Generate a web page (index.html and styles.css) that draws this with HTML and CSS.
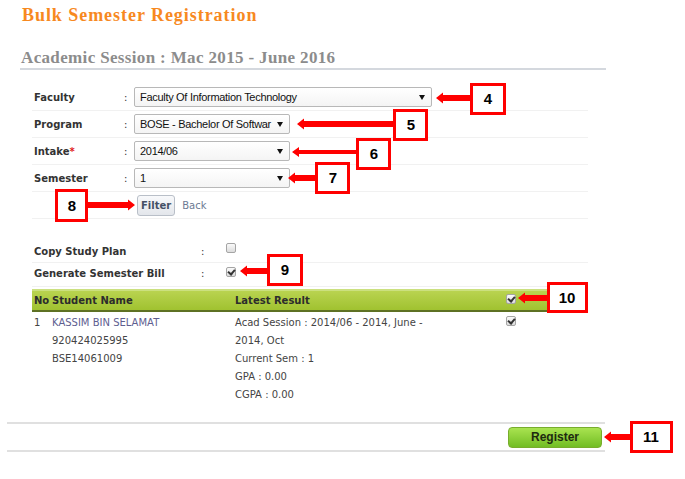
FILE: index.html
```html
<!DOCTYPE html>
<html>
<head>
<meta charset="utf-8">
<link rel="stylesheet" href="styles.css">
</head>
<body>
<div class="page">
  <h1 class="title">Bulk Semester Registration</h1>
  <h2 class="session">Academic Session : Mac 2015 - June 2016</h2>

  <div class="form">
    <div class="frow">
      <span class="lbl">Faculty</span><span class="colon">:</span>
      <div class="sel sel-wide"><span class="sel-text">Faculty Of Information Technology</span><i class="caret"></i></div>
    </div>
    <div class="frow">
      <span class="lbl">Program</span><span class="colon">:</span>
      <div class="sel"><span class="sel-text">BOSE - Bachelor Of Softwar</span><i class="caret"></i></div>
    </div>
    <div class="frow">
      <span class="lbl">Intake<b class="req">*</b></span><span class="colon">:</span>
      <div class="sel"><span class="sel-text">2014/06</span><i class="caret"></i></div>
    </div>
    <div class="frow">
      <span class="lbl">Semester</span><span class="colon">:</span>
      <div class="sel"><span class="sel-text">1</span><i class="caret"></i></div>
    </div>
    <div class="frow actions">
      <span></span><span></span>
      <div class="act"><span class="btn-filter">Filter</span><span class="back">Back</span></div>
    </div>
  </div>

  <div class="opts">
    <div class="orow">
      <span class="olbl">Copy Study Plan</span><span class="ocolon">:</span><span class="cb"></span>
    </div>
    <div class="orow">
      <span class="olbl">Generate Semester Bill</span><span class="ocolon">:</span><span class="cb checked"></span>
    </div>
  </div>

  <div class="list">
    <div class="lhead">
      <span class="c-no">No</span><span class="c-name">Student Name</span><span class="c-res">Latest Result</span><span class="c-cb"><span class="cb checked"></span></span>
    </div>
    <div class="lrow">
      <span class="c-no">1</span>
      <span class="c-name"><span class="sname">KASSIM BIN SELAMAT</span><br>920424025995<br>BSE14061009</span>
      <span class="c-res">Acad Session : 2014/06 - 2014, June - 2014, Oct<br>Current Sem : 1<br>GPA : 0.00<br>CGPA : 0.00</span>
      <span class="c-cb"><span class="cb checked"></span></span>
    </div>
  </div>

  <div class="footer">
    <span class="btn-register">Register</span>
  </div>

  <svg class="callouts" width="685" height="479" viewBox="0 0 685 479">
    <g fill="#f00">
      <polygon points="436,98 443,92.5 443,95 470,95 470,101 443,101 443,103.5"/>
      <polygon points="297,124 304,118.5 304,121 393,121 393,127 304,127 304,129.5"/>
      <polygon points="292,152 299,147 299,150 356,150 356,154 299,154 299,157"/>
      <polygon points="288,178 295,172.5 295,175 315,175 315,181 295,181 295,183.5"/>
      <polygon points="135,205 128,199.5 128,202 88,202 88,208 128,208 128,210.5"/>
      <polygon points="240,271 247,265.5 247,268 267,268 267,274 247,274 247,276.5"/>
      <polygon points="518,298 525,292.5 525,295 547,295 547,301 525,301 525,303.5"/>
      <polygon points="604,437 611,431.5 611,434 630,434 630,440 611,440 611,442.5"/>
    </g>
    <g fill="#fff" stroke="#f00" stroke-width="3">
      <rect x="471.5" y="84.5" width="33" height="29"/>
      <rect x="394.5" y="110.5" width="32" height="29"/>
      <rect x="357.5" y="139.5" width="32" height="29"/>
      <rect x="316.5" y="163.5" width="32" height="29"/>
      <rect x="56.5" y="190.5" width="30" height="30"/>
      <rect x="268.5" y="255.5" width="33" height="29"/>
      <rect x="548.5" y="283.5" width="38" height="28"/>
      <rect x="631.5" y="422.5" width="40" height="29"/>
    </g>
    <g class="num" text-anchor="middle">
      <text x="488" y="104">4</text>
      <text x="411" y="130">5</text>
      <text x="374" y="159">6</text>
      <text x="333" y="183">7</text>
      <text x="72" y="211">8</text>
      <text x="285" y="275">9</text>
      <text x="567" y="303">10</text>
      <text x="651" y="442">11</text>
    </g>
  </svg>
</div>
</body>
</html>
```

FILE: styles.css
```css
html, body {
  margin: 0;
  padding: 0;
  background: #fff;
}

body {
  font-family: "DejaVu Sans", Verdana, sans-serif;
  font-size: 10px;
  color: #333;
}

.page {
  position: relative;
  width: 685px;
  height: 479px;
  overflow: hidden;
}

.title {
  margin: 0;
  padding: 4px 0 0 22px;
  font: bold 18px/22px "Liberation Serif", Georgia, serif;
  letter-spacing: 0.95px;
  color: #f7891f;
}

.session {
  margin: 22px 0 0 20px;
  width: 585px;
  padding: 0 0 0 1px;
  font: bold 17px/20px "Liberation Serif", Georgia, serif;
  letter-spacing: 0.35px;
  color: #8c8c8c;
  border-bottom: 2px solid #d4d8de;
}

/* ---------- filter form ---------- */
.form {
  margin: 14px 0 0 32px;
  width: 556px;
}

.frow {
  display: grid;
  grid-template-columns: 92px 10px 1fr;
  align-items: center;
  height: 26px;
  border-bottom: 1px solid #f1f1f1;
}

.lbl {
  padding-left: 2px;
  font-weight: bold;
  color: #333;
}

.req {
  color: #e02020;
}

.colon {
  color: #333;
}

.sel {
  position: relative;
  box-sizing: border-box;
  width: 156px;
  height: 20px;
  border: 1px solid #b8b8b8;
  border-radius: 2px;
  background: linear-gradient(#ffffff, #f4f4f4);
  padding: 0 18px 0 5px;
  overflow: hidden;
  white-space: nowrap;
  font: 11px/18px "Liberation Sans", Arial, sans-serif;
  letter-spacing: -0.3px;
  color: #111;
}

.sel-wide {
  width: 298px;
}

.sel-text {
  display: block;
}

.caret {
  position: absolute;
  right: 6px;
  top: 7px;
  width: 0;
  height: 0;
  border-left: 3px solid transparent;
  border-right: 3px solid transparent;
  border-top: 5px solid #111;
}

.actions {
  height: 26px;
}

.act {
  display: flex;
  align-items: center;
  gap: 7px;
  padding-left: 3px;
}

.btn-filter {
  box-sizing: border-box;
  height: 21px;
  padding: 0 3px;
  border: 1px solid #b9bfc8;
  border-radius: 3px;
  background: linear-gradient(#f8f9fb, #e3e6eb);
  font-weight: bold;
  line-height: 19px;
  color: #445066;
}

.back {
  color: #6c7a93;
}

/* ---------- options ---------- */
.opts {
  margin: 22px 0 0 32px;
  width: 556px;
}

.orow {
  display: grid;
  grid-template-columns: 169px 25px 1fr;
  height: 21px;
  border-bottom: 1px solid #f1f1f1;
  align-items: start;
}

.orow + .orow {
  height: 23px;
}

.olbl {
  padding: 5px 0 0 2px;
  font-weight: bold;
  color: #333;
}

.ocolon {
  padding-top: 5px;
}

.orow .cb {
  margin-top: 2px;
}

.orow + .orow .cb {
  margin-top: 4px;
}

.cb {
  display: inline-block;
  box-sizing: border-box;
  width: 10px;
  height: 10px;
  border: 1px solid #a5a5a5;
  border-radius: 2px;
  background: linear-gradient(#fafafa, #dcdcdc);
  position: relative;
}

.cb.checked::after {
  content: "";
  position: absolute;
  left: 2px;
  top: 0px;
  width: 3px;
  height: 5px;
  border-right: 2px solid #333;
  border-bottom: 2px solid #333;
  transform: rotate(40deg);
}

/* ---------- list ---------- */
.list {
  margin: 2px 0 0 32px;
  width: 556px;
}

.lhead {
  display: grid;
  grid-template-columns: 20px 183px 271px 1fr;
  height: 19px;
  align-items: center;
  border-top: 2px solid #cbe07f;
  border-bottom: 2px solid #5e7124;
  background: linear-gradient(#b9d350, #a0c230);
  font-weight: bold;
  color: #2c2c2c;
}

.lhead .c-no {
  padding-left: 2px;
}

.lhead .c-cb {
  line-height: 0;
  padding-bottom: 3px;
}

.lrow {
  display: grid;
  grid-template-columns: 20px 183px 271px 1fr;
  padding-top: 2px;
  line-height: 18px;
  color: #444;
}

.lrow .c-no {
  padding-left: 2px;
}

.lrow .c-res {
  padding-right: 68px;
}

.lrow .c-cb {
  line-height: 0;
  padding-top: 2px;
}

.sname {
  color: #5e5e90;
}

/* ---------- footer ---------- */
.footer {
  margin: 18px 0 0 7px;
  width: 598px;
  height: 26px;
  border-top: 2px solid #e0e0e0;
  border-bottom: 2px solid #e0e0e0;
  display: flex;
  justify-content: flex-end;
  align-items: center;
}

.btn-register {
  box-sizing: border-box;
  width: 94px;
  height: 21px;
  margin-right: 3px;
  border: 1px solid #78ad2c;
  border-radius: 4px;
  background: linear-gradient(#a9e350, #72bd24);
  text-align: center;
  font: bold 12px/19px "Liberation Sans", Arial, sans-serif;
  color: #1e2a10;
}

/* ---------- annotation overlay ---------- */
.callouts {
  position: absolute;
  left: 0;
  top: 0;
  pointer-events: none;
}

.num text {
  font: bold 15px "Liberation Sans", Arial, sans-serif;
  fill: #000;
}
```
